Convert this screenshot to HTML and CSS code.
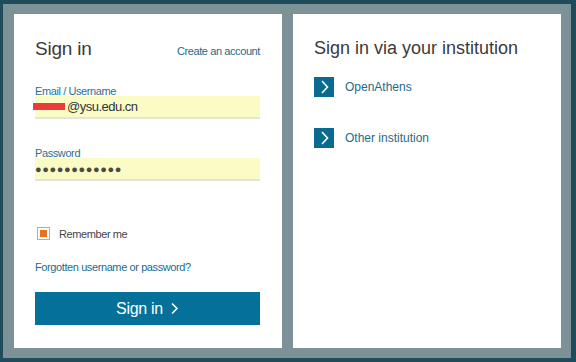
FILE: index.html
```html
<!DOCTYPE html>
<html lang="en">
<head>
    <meta charset="UTF-8">
    <title>Sign in</title>
    <link rel="stylesheet" href="styles.css">
</head>
<body>
    <div class="frame">
        <!-- account sign in -->
        <div class="panel login">
            <div class="login-head">
                <h1>Sign in</h1>
                <a href="#" class="link">Create an account</a>
            </div>

            <label class="field-label" for="user">Email / Username</label>
            <div class="field" id="user">
                <span class="redact"></span><span>@ysu.edu.cn</span>
            </div>

            <label class="field-label pass-label" for="pass">Password</label>
            <div class="field dots" id="pass">&#9679;&#9679;&#9679;&#9679;&#9679;&#9679;&#9679;&#9679;&#9679;&#9679;&#9679;&#9679;</div>

            <div class="remember">
                <span class="check"><span></span></span>
                <span>Remember me</span>
            </div>

            <a href="#" class="link forgot">Forgotten username or password?</a>

            <button class="submit">Sign in
                <svg width="9" height="13" viewBox="0 0 9 13"><path d="M2 1.5 L7 6.5 L2 11.5" fill="none" stroke="#fff" stroke-width="1.6"/></svg>
            </button>
        </div>

        <!-- institution sign in -->
        <div class="panel inst">
            <h2>Sign in via your institution</h2>
            <a href="#" class="inst-row">
                <span class="arrow"><svg width="20" height="20" viewBox="0 0 20 20"><path d="M8 4 L13.5 10 L8 16" fill="none" stroke="#fff" stroke-width="1.6"/></svg></span>
                <span>OpenAthens</span>
            </a>
            <a href="#" class="inst-row">
                <span class="arrow"><svg width="20" height="20" viewBox="0 0 20 20"><path d="M8 4 L13.5 10 L8 16" fill="none" stroke="#fff" stroke-width="1.6"/></svg></span>
                <span>Other institution</span>
            </a>
        </div>
    </div>
</body>
</html>
```

FILE: styles.css
```css
body {
    margin: 0;
    background-color: #1e4c58;
    font-family: "Liberation Sans", Arial, sans-serif;
}
.frame {
    display: flex;
    gap: 11px;
    margin: 4px 5px 4px 3px;
    padding: 10px 10px 10px 11px;
    height: 334px;
    background-color: #7d9298;
}
.panel {
    width: 268px;
    background-color: #fff;
    box-sizing: border-box;
}
.login {
    display: flex;
    flex-direction: column;
    padding: 24px 22px 0 21px;
}
.login-head {
    display: flex;
    justify-content: space-between;
    align-items: baseline;
}
h1, h2 {
    margin: 0;
    font-weight: normal;
    color: #3a3a3a;
}
h1 {
    font-size: 19px;
    letter-spacing: -0.2px;
}
.link {
    color: #1d6b8d;
    font-size: 11px;
    letter-spacing: -0.4px;
    text-decoration: none;
}
.field-label {
    margin-top: 26px;
    font-size: 11px;
    line-height: 10px;
    letter-spacing: -0.4px;
    color: #2c6f92;
}
.pass-label {
    margin-top: 29px;
}
.field {
    display: flex;
    align-items: center;
    height: 21px;
    background-color: #fbfbc6;
    border-bottom: 2px solid #e4e4d8;
    font-size: 13px;
    letter-spacing: -0.5px;
    color: #333;
}
.redact {
    width: 32px;
    height: 7px;
    margin-left: -2px;
    margin-right: 2px;
    background-color: #ee3a3a;
}
.dots {
    font-size: 11px;
    letter-spacing: 0.6px;
    color: #4a4a40;
}
.remember {
    display: flex;
    align-items: center;
    gap: 9px;
    margin-top: 46px;
    padding-left: 2px;
    font-size: 11px;
    letter-spacing: -0.4px;
    color: #444;
}
.check {
    display: flex;
    align-items: center;
    justify-content: center;
    width: 11px;
    height: 11px;
    border: 1px solid #b0b0b0;
}
.check span {
    width: 7px;
    height: 7px;
    background-color: #e8731f;
}
.forgot {
    margin-top: 21px;
}
.submit {
    display: flex;
    align-items: center;
    justify-content: center;
    gap: 7px;
    margin-top: 19px;
    height: 33px;
    border: none;
    background-color: #05709a;
    color: #fff;
    font-family: "Liberation Sans", Arial, sans-serif;
    font-size: 16px;
    letter-spacing: -0.3px;
}
.inst {
    padding: 24px 20px 0 21px;
}
h2 {
    font-size: 18px;
    margin-bottom: 18px;
}
.inst-row {
    display: flex;
    align-items: center;
    gap: 11px;
    margin-bottom: 31px;
    color: #1d6b8d;
    font-size: 12px;
    text-decoration: none;
}
.arrow {
    display: flex;
    width: 20px;
    height: 20px;
    background-color: #0a6b91;
}
```
